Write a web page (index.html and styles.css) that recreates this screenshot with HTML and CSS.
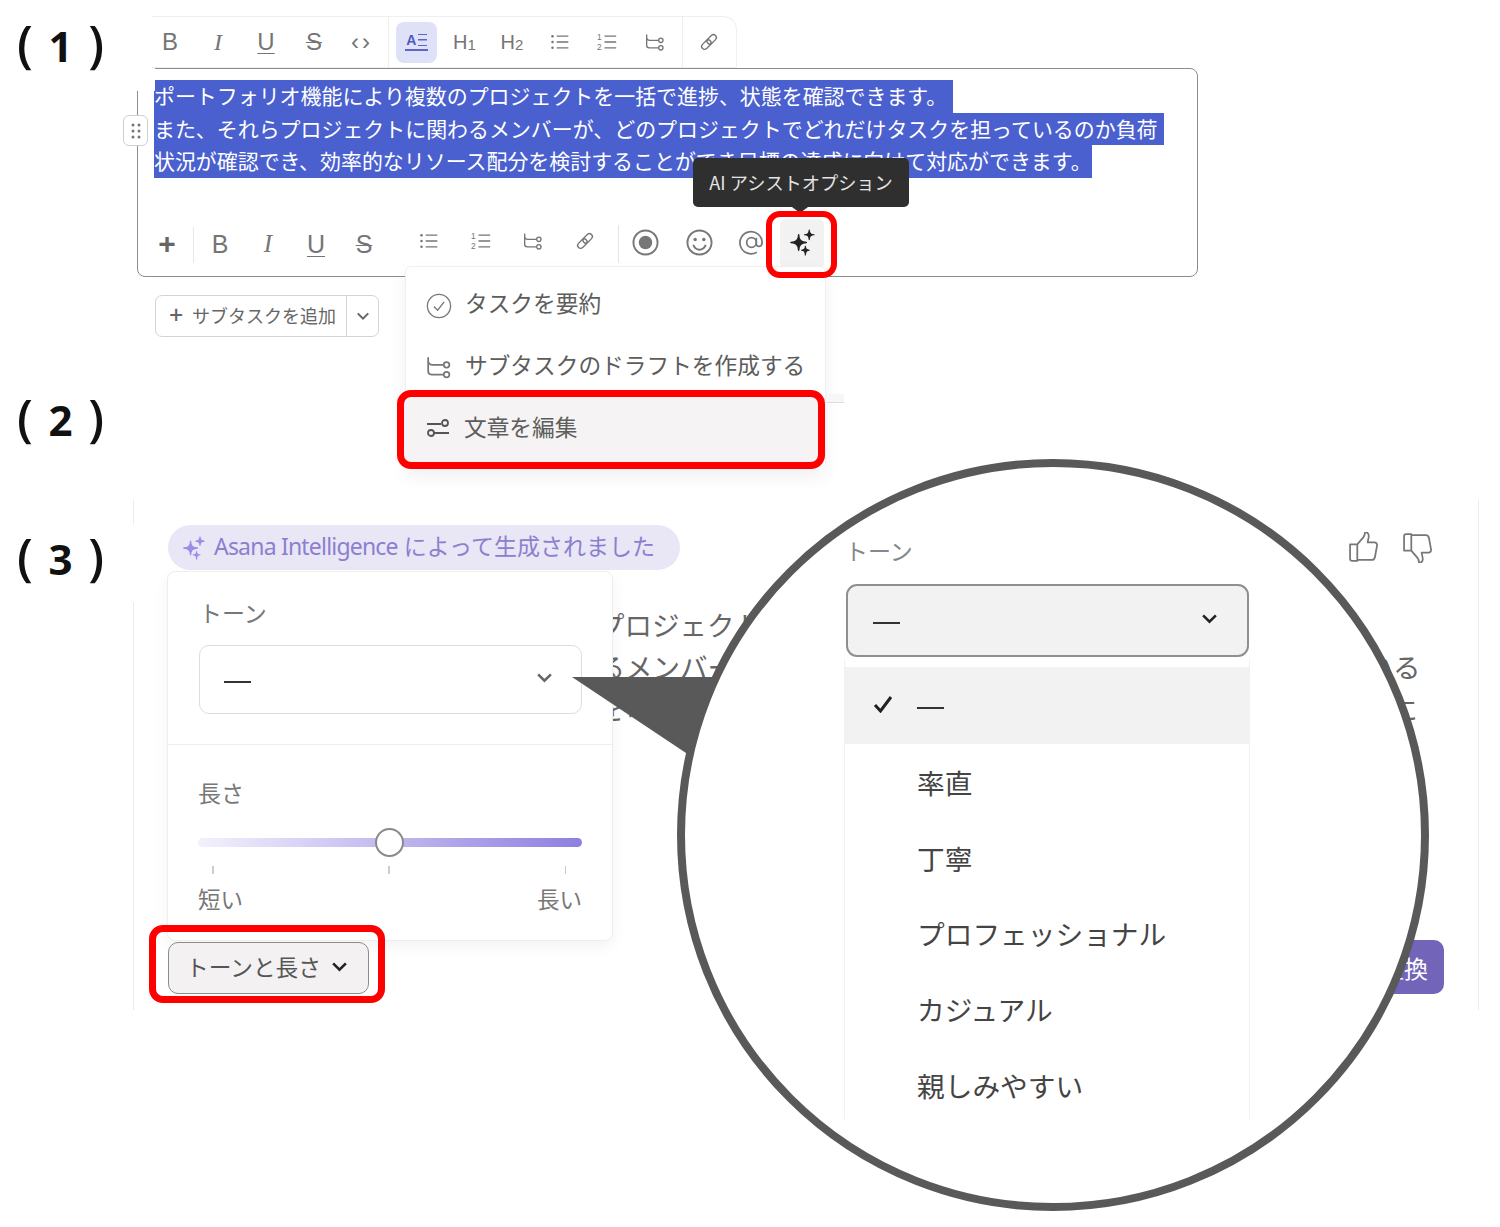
FILE: index.html
```html
<!DOCTYPE html>
<html lang="ja">
  <head>
    <meta charset="UTF-8" />
    <title>AIアシストの手順</title>
    <link rel="stylesheet" href="styles.css">
  </head>
  <body>
    <svg class="defs" width="0" height="0">
      <symbol id="i-list" viewBox="0 0 24 24">
        <path d="M8 5h14M8 12h14M8 19h14" fill="none" stroke="currentColor" stroke-width="1.6" />
        <circle cx="3" cy="5" r="1.5" fill="currentColor" /><circle cx="3" cy="12" r="1.5" fill="currentColor" /><circle cx="3" cy="19" r="1.5" fill="currentColor" />
      </symbol>
      <symbol id="i-sub" viewBox="0 0 24 24">
        <path d="M2 3v13a3 3 0 0 0 3 3h11M2 6a4 4 0 0 0 4 4h10" fill="none" stroke="currentColor" stroke-width="1.6" />
        <circle cx="19" cy="10" r="2.6" fill="none" stroke="currentColor" stroke-width="1.6" />
        <circle cx="19" cy="19" r="2.6" fill="none" stroke="currentColor" stroke-width="1.6" />
      </symbol>
      <symbol id="i-link" viewBox="0 0 24 24">
        <g fill="none" stroke="currentColor" stroke-width="1.6" transform="rotate(-45 12 12)">
          <rect x="1" y="8.5" width="13" height="7" rx="3.5" />
          <rect x="10" y="8.5" width="13" height="7" rx="3.5" />
        </g>
      </symbol>
      <symbol id="i-record" viewBox="0 0 28 28">
        <circle cx="14" cy="14" r="12.5" fill="none" stroke="currentColor" stroke-width="2" />
        <circle cx="14" cy="14" r="7" fill="currentColor" />
      </symbol>
      <symbol id="i-smile" viewBox="0 0 28 28">
        <circle cx="14" cy="14" r="12.5" fill="none" stroke="currentColor" stroke-width="2" />
        <circle cx="9.5" cy="11" r="1.8" fill="currentColor" /><circle cx="18.5" cy="11" r="1.8" fill="currentColor" />
        <path d="M7.5 16.5c1.5 3.5 4 5 6.5 5s5-1.5 6.5-5" fill="none" stroke="currentColor" stroke-width="2" />
      </symbol>
      <symbol id="i-at" viewBox="0 0 28 28">
        <circle cx="14" cy="14" r="5" fill="none" stroke="currentColor" stroke-width="1.8" />
        <path d="M19 9v6.500c0 3.500 6 3.500 6-1.500A11.500 11.500 0 1 0 19.500 24" fill="none" stroke="currentColor" stroke-width="1.8" />
      </symbol>
      <symbol id="i-spark" viewBox="0 0 28 28">
        <path d="M10 6Q10 14 18 14Q10 14 10 22Q10 14 2 14Q10 14 10 6Z" fill="currentColor" stroke="currentColor" stroke-width="1.5" stroke-linejoin="round" />
        <path d="M21 1Q21 6 26 6Q21 6 21 11Q21 6 16 6Q21 6 21 1Z" fill="currentColor" stroke="currentColor" stroke-width="1.2" stroke-linejoin="round" />
        <path d="M17 18Q17 22 21 22Q17 22 17 27Q17 22 13 22Q17 22 17 18Z" fill="currentColor" stroke="currentColor" stroke-width="1.2" stroke-linejoin="round" />
      </symbol>
      <symbol id="i-chev" viewBox="0 0 16 16">
        <path d="M2 5l6 6 6-6" fill="none" stroke="currentColor" stroke-width="2.4" />
      </symbol>
      <symbol id="i-check" viewBox="0 0 28 28">
        <circle cx="14" cy="14" r="12.5" fill="none" stroke="currentColor" stroke-width="1.4" />
        <path d="M8.500 14.500l4 4 7-9" fill="none" stroke="currentColor" stroke-width="1.4" />
      </symbol>
      <symbol id="i-tick" viewBox="0 0 20 18">
        <path d="M2 10l5.500 6L18 2" fill="none" stroke="currentColor" stroke-width="3" />
      </symbol>
      <symbol id="i-slide" viewBox="0 0 24 20">
        <path d="M1 6h14M8 15h15" fill="none" stroke="currentColor" stroke-width="1.8" />
        <circle cx="19" cy="5" r="3" fill="none" stroke="currentColor" stroke-width="1.8" />
        <circle cx="5" cy="15" r="3" fill="none" stroke="currentColor" stroke-width="1.8" />
      </symbol>
      <symbol id="i-up" viewBox="0 0 28 30">
        <path d="M8 13l6-7c1-1.500 1.500-3 1.500-5 2.500 0 4 2 3.500 5l-1 5h6.500c1.800 0 3 1.500 2.600 3.200l-2 11c-.3 1.500-1.500 2.800-3 2.800H8zM1 13h7v16H3a2 2 0 0 1-2-2z" fill="none" stroke="currentColor" stroke-width="1.7" stroke-linejoin="round" transform="translate(0 -1)" />
      </symbol>
      <symbol id="i-dots" viewBox="0 0 12 18">
        <g fill="currentColor">
          <circle cx="3" cy="3" r="1.5" /><circle cx="9" cy="3" r="1.5" />
          <circle cx="3" cy="9" r="1.5" /><circle cx="9" cy="9" r="1.5" />
          <circle cx="3" cy="15" r="1.5" /><circle cx="9" cy="15" r="1.5" />
        </g>
      </symbol>
    </svg>

    <div class="canvas">
      <div class="step step-1"><span class="paren">(</span><span>1</span><span class="paren">)</span></div>
      <div class="step step-2"><span class="paren">(</span><span>2</span><span class="paren">)</span></div>
      <div class="step step-3"><span class="paren">(</span><span>3</span><span class="paren">)</span></div>

      <div class="top-toolbar">
        <div class="tool-group first">
          <span class="tool t-b">B</span>
          <span class="tool t-i">I</span>
          <span class="tool t-u">U</span>
          <span class="tool t-s">S</span>
          <span class="tool t-code">‹›</span>
        </div>
        <div class="tool-group second">
          <span class="tool"><span class="t-active"><span class="t-a">A</span><span class="t-lines"></span></span></span>
          <span class="tool t-h">H<small>1</small></span>
          <span class="tool t-h">H<small>2</small></span>
          <span class="tool"><svg class="ic"><use href="#i-list" /></svg></span>
          <span class="tool">
            <svg class="ic" viewBox="0 0 24 24">
              <path d="M9 5h14M9 12h14M9 19h14" fill="none" stroke="currentColor" stroke-width="1.6" />
              <text x="0" y="10" font-size="10" font-family="Liberation Sans" fill="currentColor">1</text>
              <text x="0" y="22" font-size="10" font-family="Liberation Sans" fill="currentColor">2</text>
            </svg>
          </span>
          <span class="tool"><svg class="ic"><use href="#i-sub" /></svg></span>
        </div>
        <div class="tool-group third">
          <span class="tool"><svg class="ic"><use href="#i-link" /></svg></span>
        </div>
      </div>

      <div class="editor">
        <div class="handle"><svg class="dots"><use href="#i-dots" /></svg></div>
        <div class="selected">
          <span class="sel-line pad">ポートフォリオ機能により複数のプロジェクトを一括で進捗、状態を確認できます。</span>
          <span class="sel-line pad">また、それらプロジェクトに関わるメンバーが、どのプロジェクトでどれだけタスクを担っているのか負荷</span>
          <span class="sel-line">状況が確認でき、効率的なリソース配分を検討することができ目標の達成に向けて対応ができます。</span>
        </div>
        <div class="bottom-toolbar">
          <span class="tool plus">+</span>
          <span class="tool wide t-b">B</span>
          <span class="tool wide t-i">I</span>
          <span class="tool wide t-u">U</span>
          <span class="tool wide t-s">S</span>
          <span class="tool wider gap-left"><svg class="ic raise"><use href="#i-list" /></svg></span>
          <span class="tool wider">
            <svg class="ic raise" viewBox="0 0 24 24">
              <path d="M9 5h14M9 12h14M9 19h14" fill="none" stroke="currentColor" stroke-width="1.6" />
              <text x="0" y="10" font-size="10" font-family="Liberation Sans" fill="currentColor">1</text>
              <text x="0" y="22" font-size="10" font-family="Liberation Sans" fill="currentColor">2</text>
            </svg>
          </span>
          <span class="tool wider"><svg class="ic raise"><use href="#i-sub" /></svg></span>
          <span class="tool wider"><svg class="ic raise"><use href="#i-link" /></svg></span>
          <span class="tool wider rule-left"><svg class="ic big"><use href="#i-record" /></svg></span>
          <span class="tool wider"><svg class="ic big"><use href="#i-smile" /></svg></span>
          <span class="tool wider"><svg class="ic big"><use href="#i-at" /></svg></span>
          <span class="tool ai-tool"><svg class="ic spark"><use href="#i-spark" /></svg></span>
        </div>
        <div class="tooltip">AI アシストオプション</div>
      </div>

      <div class="subtask">
        <span class="subtask-add"><b>+</b>サブタスクを追加</span>
        <span class="subtask-more"><svg class="chev"><use href="#i-chev" /></svg></span>
      </div>

      <div class="ai-menu">
        <div class="menu-item"><svg class="menu-ic"><use href="#i-check" /></svg><span>タスクを要約</span></div>
        <div class="menu-item"><svg class="menu-ic"><use href="#i-sub" /></svg><span>サブタスクのドラフトを作成する</span></div>
        <div class="menu-item marked"><svg class="menu-ic small"><use href="#i-slide" /></svg><span>文章を編集</span></div>
      </div>
      <span class="mark ai-mark"></span>

      <div class="result">
        <div class="result-head">
          <div class="pill">
            <svg class="pill-spark"><use href="#i-spark" /></svg>
            <span class="pill-text"><span class="latin">Asana Intelligence</span> によって生成されました</span>
          </div>
          <div class="thumbs">
            <svg class="thumb"><use href="#i-up" /></svg>
            <svg class="thumb down"><use href="#i-up" /></svg>
          </div>
        </div>
        <div class="result-text">
          <p>ポートフォリオ機能により複数のプロジェクトの進捗と状態を一括で確認できます。</p>
          <p>また、複数のプロジェクトに関わるメンバーが、どのプロジェクトでどれだけのタスクを担っている</p>
          <p>のか負荷の状況まで把握することを可能にしつつ、より効率的なリソース配分の検討と目標の達成に</p>
        </div>
        <div class="result-foot">
          <div class="tone-wrap">
            <button class="tone-btn">トーンと長さ<svg class="chev dark"><use href="#i-chev" /></svg></button>
            <span class="mark"></span>
          </div>
          <button class="replace-btn">置換</button>
        </div>

        <div class="popover">
          <div class="pop-tone">
            <div class="pop-label">トーン</div>
            <div class="select"><span class="dash"></span><svg class="chev"><use href="#i-chev" /></svg></div>
          </div>
          <div class="pop-length">
            <div class="pop-label">長さ</div>
            <div class="slider"><span class="thumb-knob"></span></div>
            <div class="ticks"><i></i><i></i><i></i></div>
            <div class="slider-ends"><span>短い</span><span>長い</span></div>
          </div>
        </div>
      </div>

      <svg class="pointer" width="170" height="90" viewBox="0 0 170 90">
        <polygon points="0,0 170,0 120,80" fill="#595959" />
      </svg>

      <div class="lens">
        <div class="lens-label">トーン</div>
        <div class="lens-select"><span class="dash"></span><svg class="chev dark"><use href="#i-chev" /></svg></div>
        <div class="lens-list">
          <div class="lens-item current"><svg class="tick"><use href="#i-tick" /></svg><span class="dash"></span></div>
          <div class="lens-item">率直</div>
          <div class="lens-item">丁寧</div>
          <div class="lens-item">プロフェッショナル</div>
          <div class="lens-item">カジュアル</div>
          <div class="lens-item">親しみやすい</div>
        </div>
      </div>
    </div>
  </body>
</html>
```

FILE: styles.css
```css
* {
  box-sizing: border-box;
}
body {
  margin: 0;
  background: #fff;
  font-family: "Noto Sans", "Noto Sans CJK JP", sans-serif;
  color: #666;
}
.defs {
  position: absolute;
}
.canvas {
  position: relative;
  width: 1500px;
  height: 1227px;
  overflow: hidden;
  padding-top: 16px;
}

/* (1) (2) (3) */
.step {
  position: absolute;
  left: 17px;
  width: 87px;
  display: flex;
  justify-content: space-between;
  align-items: center;
  height: 50px;
  font-family: "Open Sans", sans-serif;
  font-weight: 700;
  font-size: 42px;
  line-height: 50px;
  color: #111;
}
.paren {
  font-size: 50px;
  font-weight: 600;
  margin-top: -6px;
}
.step-1 { top: 21px; }
.step-2 { top: 395px; }
.step-3 { top: 534px; }

/* toolbars */
.top-toolbar {
  display: flex;
  width: 585px;
  height: 52px;
  margin-left: 152px;
  border: 1px solid #efefef;
  border-left: none;
  border-radius: 0 14px 0 0;
  background: #fff;
  position: relative;
  z-index: 2;
}
.tool-group {
  display: flex;
  height: 100%;
}
.tool-group.first {
  width: 237px;
  border-right: 1px solid #eee;
}
.tool-group.first .tool:first-child {
  margin-left: -6px;
}
.tool-group.second {
  width: 294px;
  padding-left: 4px;
  border-right: 1px solid #eee;
}
.tool-group.third {
  padding-left: 2px;
}
.tool {
  flex: none;
  width: 48px;
  height: 100%;
  display: flex;
  align-items: center;
  justify-content: center;
  color: #757575;
  font-family: "Liberation Sans", sans-serif;
  font-size: 24px;
  position: relative;
}
.tool-group.second .tool {
  width: 47.6px;
}
.t-i {
  font-family: "Liberation Serif", serif;
  font-style: italic;
}
.t-u {
  text-decoration: underline;
  text-underline-offset: 3px;
  text-decoration-thickness: 1px;
}
.t-s {
  text-decoration: line-through;
  text-decoration-thickness: 1px;
}
.t-code {
  font-size: 24px;
  letter-spacing: 3px;
}
.t-h {
  font-size: 20px;
}
.t-h small {
  font-size: 15px;
  margin-top: 5px;
}
.t-active {
  position: relative;
  width: 41px;
  height: 41px;
  border-radius: 8px;
  background: #dfe1f8;
  color: #4a5bc4;
  display: flex;
  align-items: center;
  justify-content: center;
  gap: 2px;
}
.t-active::after {
  content: "";
  position: absolute;
  left: 9px;
  bottom: 12px;
  width: 23px;
  height: 2px;
  background: #5a68c4;
}
.t-a {
  font-size: 14px;
  font-weight: 700;
  line-height: 16px;
  margin-top: -5px;
}
.t-lines {
  width: 9px;
  height: 12px;
  margin-top: -5px;
  border-top: 1.5px solid #5a68c4;
  border-bottom: 1.5px solid #5a68c4;
  background: linear-gradient(#5a68c4, #5a68c4) center / 100% 1.5px no-repeat;
}
.ic {
  width: 20px;
  height: 20px;
}
.ic.raise {
  margin-top: -6px;
}
.ic.big {
  width: 27px;
  height: 27px;
  margin-top: -4px;
  color: #777;
}
.ic.spark {
  width: 27px;
  height: 27px;
  color: #222;
  margin-top: -4px;
}

/* editor */
.editor {
  position: relative;
  width: 1061px;
  height: 209px;
  margin-left: 137px;
  padding: 11px 0 0 16px;
  border: 1.5px solid #8c8c8c;
  border-radius: 8px;
  display: flex;
  flex-direction: column;
  justify-content: space-between;
}
.editor::before {
  content: "";
  position: absolute;
  left: -3px;
  top: -3px;
  width: 20px;
  height: 25px;
  background: #fff;
}
.handle {
  position: absolute;
  left: -15px;
  top: 46px;
  width: 25px;
  height: 31px;
  background: #fff;
  border: 1.5px solid #cfcfcf;
  border-radius: 6px;
  display: flex;
  align-items: center;
  justify-content: center;
  color: #777;
}
.dots {
  width: 12px;
  height: 18px;
}
.selected {
  display: flex;
  flex-direction: column;
  align-items: flex-start;
  font-family: "Noto Sans CJK JP", sans-serif;
  font-size: 20.95px;
  line-height: 30px;
  color: #fff;
  white-space: nowrap;
}
.sel-line {
  background: #4b60cf;
  padding-bottom: 2.5px;
}
.sel-line.pad {
  padding-right: 6px;
}
.bottom-toolbar {
  display: flex;
  height: 50px;
  margin: 0 0 7px -10px;
}
.bottom-toolbar .tool {
  font-size: 25px;
}
.tool.plus {
  width: 46px;
  color: #666;
  font-size: 30px;
  font-weight: 700;
  margin-right: 6px;
}
.tool.wide {
  width: 48px;
}
.tool.wider {
  width: 52px;
}
.tool.gap-left {
  margin-left: 15px;
}
.rule-left {
  margin-left: 7px;
  width: 55px !important;
}
.rule-left::before {
  content: "";
  position: absolute;
  left: 0;
  top: 6px;
  bottom: 6px;
  border-left: 1px solid #e4e4e4;
}
.tool.plus::after {
  content: "";
  position: absolute;
  right: -4px;
  top: 8px;
  bottom: 6px;
  border-right: 1px solid #e8e8e8;
}
.tool.ai-tool {
  width: 44px;
  background: #f3f2f2;
  border-radius: 6px;
  margin-left: 3px;
}
.mark {
  position: absolute;
  border: 6px solid #f00;
  border-radius: 14px;
  pointer-events: none;
}
.ai-mark {
  left: 766px;
  top: 211px;
  width: 71px;
  height: 67px;
}
.tooltip {
  position: absolute;
  left: 555px;
  top: 89px;
  width: 216px;
  height: 49px;
  background: #2f2f2f;
  color: #e4e4e4;
  border-radius: 5px;
  font-family: "Noto Sans CJK JP", sans-serif;
  font-size: 18.2px;
  line-height: 49px;
  text-align: center;
}
.tooltip::after {
  content: "";
  position: absolute;
  left: 99px;
  top: 49px;
  border: 8px solid transparent;
  border-top: 6px solid #2f2f2f;
}

/* subtask button */
.subtask {
  display: flex;
  width: 224px;
  height: 42px;
  margin: 18px 0 0 155px;
  border: 1.5px solid #d4d4d4;
  border-radius: 7px;
  font-size: 18px;
  color: #666;
}
.subtask-add {
  flex: 1;
  display: flex;
  align-items: center;
  padding: 0 0 2px 13px;
  border-right: 1.5px solid #d4d4d4;
}
.subtask-add b {
  font-size: 25px;
  font-weight: 500;
  width: 23px;
  margin-top: -3px;
}
.subtask-more {
  width: 31px;
  display: flex;
  align-items: center;
  justify-content: center;
}
.chev {
  width: 14px;
  height: 14px;
  color: #666;
}
.chev.dark {
  color: #222;
  width: 17px;
  height: 17px;
}

/* AI menu */
.ai-menu {
  position: absolute;
  left: 405px;
  top: 266px;
  width: 421px;
  padding-top: 8px;
  background: #fff;
  border: 1px solid #f0f0f0;
  border-bottom: none;
  border-radius: 6px;
  box-shadow: 0 8px 18px rgba(0, 0, 0, 0.06);
  font-family: "Noto Sans CJK JP", sans-serif;
  font-size: 22.7px;
  color: #5d5d5d;
}
.menu-item {
  display: flex;
  align-items: center;
  height: 61.5px;
  padding-left: 20px;
  white-space: nowrap;
}
.menu-item span {
  margin-top: -6px;
}
.menu-ic {
  width: 26px;
  height: 26px;
  margin-right: 13px;
  color: #777;
  flex: none;
}
.menu-ic.small {
  color: #555;
  width: 24px;
  height: 20px;
  margin-right: 14px;
  margin-top: -3px;
}
.menu-item.marked {
  height: 79px;
  margin: -8px 0 0 -9px;
  padding-left: 22px;
  border: 7px solid #f00;
  border-radius: 14px;
  background: #f5f3f3;
  position: relative;
}
.ai-menu::after {
  content: "";
  position: absolute;
  left: 420px;
  top: 127px;
  width: 18px;
  height: 8px;
  background: #f6f6f6;
  border-bottom: 1px solid #ddd;
}

/* generated result panel */
.result {
  position: relative;
  display: flex;
  flex-direction: column;
  width: 1346px;
  height: 510px;
  margin: 163px 0 0 133px;
  padding: 25px 46px 16px 34px;
  border-left: 1.5px solid #ececec;
  border-right: 1.5px solid #ececec;
}
.result::before {
  content: "";
  position: absolute;
  left: -2px;
  top: 25px;
  width: 3px;
  height: 77px;
  background: #fff;
}
.result-head {
  display: flex;
  justify-content: space-between;
  align-items: center;
}
.pill {
  display: flex;
  align-items: center;
  width: 512px;
  height: 45px;
  padding-left: 14px;
  border-radius: 23px;
  background: #e9e6f6;
  color: #8b80cf;
  font-size: 23px;
  white-space: nowrap;
}
.pill-text {
  margin-top: -5px;
}
.latin {
  letter-spacing: -0.8px;
}
.pill-spark {
  width: 24px;
  height: 24px;
  margin-right: 8px;
  color: #9a8ee6;
  flex: none;
}
.thumbs {
  display: flex;
  gap: 25px;
  color: #777;
}
.thumb {
  width: 29px;
  height: 31px;
}
.thumb.down {
  transform: rotate(180deg) scaleX(-1);
}
.result-text {
  margin-top: 33px;
  padding-left: 17px;
  font-family: "Noto Sans CJK JP", sans-serif;
  font-size: 27.5px;
  line-height: 42px;
  color: #666;
  white-space: nowrap;
}
.result-text p {
  margin: 0;
}
.result-foot {
  display: flex;
  justify-content: space-between;
  margin-top: auto;
}
.tone-wrap {
  position: relative;
  z-index: 2;
}
.tone-wrap .mark {
  inset: -17px -16px -9px -19px;
  border-width: 7px;
}
.tone-btn {
  display: flex;
  align-items: center;
  gap: 10px;
  width: 201px;
  height: 52px;
  padding: 0 0 3px 17px;
  border: 1.5px solid #8c8c8c;
  border-radius: 10px;
  background: #f3f1f1;
  color: #555;
  font-family: "Noto Sans CJK JP", sans-serif;
  font-size: 22.7px;
  white-space: nowrap;
}
.replace-btn {
  width: 120px;
  height: 54px;
  margin: -2px -12px 0 0;
  padding: 0 16px 0 0;
  border: none;
  border-radius: 10px;
  background: #7264b8;
  color: #fff;
  text-align: right;
  font-family: "Noto Sans CJK JP", sans-serif;
  font-size: 24px;
}
.popover {
  position: absolute;
  left: 33px;
  top: 71px;
  width: 446px;
  height: 370px;
  background: #fff;
  border: 1px solid #eee;
  border-radius: 8px;
  box-shadow: 0 6px 16px rgba(0, 0, 0, 0.05);
}
.pop-tone {
  height: 173px;
  padding: 22px 30px 0 31px;
  border-bottom: 1.5px solid #eee;
}
.pop-label {
  font-family: "Noto Sans CJK JP", sans-serif;
  font-size: 23px;
  line-height: 36px;
  color: #777;
}
.select {
  display: flex;
  align-items: center;
  justify-content: space-between;
  height: 69px;
  margin-top: 15px;
  padding: 0 28px 0 24px;
  border: 1.5px solid #ddd;
  border-radius: 10px;
}
.dash {
  display: block;
  width: 27px;
  height: 2px;
  background: #333;
  margin-top: 4px;
}
.select .chev {
  width: 17px;
  height: 17px;
  margin-top: -4px;
}
.pop-length {
  padding: 29px 30px 0 30px;
}
.slider {
  position: relative;
  height: 9px;
  margin-top: 28px;
  border-radius: 5px;
  background: linear-gradient(90deg, #f4f1fc, #8d7fe0);
}
.thumb-knob {
  position: absolute;
  left: 177px;
  top: -10px;
  width: 29px;
  height: 29px;
  border-radius: 50%;
  background: #fff;
  border: 2px solid #8a8a8a;
}
.ticks {
  display: flex;
  justify-content: space-between;
  padding: 0 16px 0 14px;
  margin-top: 19px;
}
.ticks i {
  display: block;
  width: 1.5px;
  height: 8px;
  background: #ccc;
}
.slider-ends {
  display: flex;
  justify-content: space-between;
  margin-top: 7px;
  font-family: "Noto Sans CJK JP", sans-serif;
  font-size: 22.5px;
  line-height: 34px;
  color: #777;
}

/* zoom callout */
.pointer {
  position: absolute;
  left: 572px;
  top: 677px;
}
.lens {
  position: absolute;
  left: 677px;
  top: 459px;
  width: 752px;
  height: 752px;
  padding: 66px 0 0 159px;
  background: #fff;
  border: 8px solid #595959;
  border-radius: 50%;
  overflow: hidden;
}
.lens-label {
  font-family: "Noto Sans CJK JP", sans-serif;
  font-size: 23px;
  line-height: 34px;
  color: #888;
  margin-left: 1px;
}
.lens-select {
  display: flex;
  align-items: center;
  justify-content: space-between;
  width: 403px;
  height: 73px;
  margin: 17px 0 0 2px;
  padding: 0 29px 0 25px;
  background: #f3f2f2;
  border: 2px solid #8f8f8f;
  border-radius: 11px;
}
.lens-select .chev {
  margin-top: -4px;
}
.lens-list {
  width: 406px;
  height: 460px;
  margin-top: 2px;
  padding-top: 8px;
  border-left: 1.5px solid #f1f1f1;
  border-right: 1.5px solid #f1f1f1;
  font-family: "Noto Sans CJK JP", sans-serif;
  font-size: 27.7px;
  color: #444;
}
.lens-item {
  display: flex;
  align-items: center;
  height: 75.7px;
  padding-left: 72px;
  white-space: nowrap;
}
.lens-item.current {
  position: relative;
  height: 77px;
  background: #f3f2f2;
}
.tick {
  position: absolute;
  left: 28px;
  top: 28px;
  width: 20px;
  height: 18px;
  color: #222;
}
```
